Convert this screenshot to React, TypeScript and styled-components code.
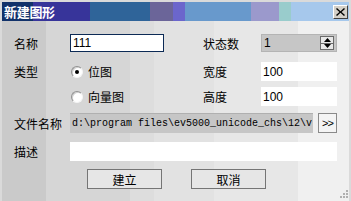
import styled, {createGlobalStyle} from "styled-components";

const GlobalStyle = createGlobalStyle`
  html, body {
    margin: 0;
    padding: 0;
    background: #ffffff;
  }
  * {
    box-sizing: border-box;
  }
`;

const cjk = `"Noto Sans CJK SC", "Noto Sans", sans-serif`;

const FILE_PATH = "d:\\program files\\ev5000_unicode_chs\\12\\v";

export default function App() {
    return (
        <>
            <GlobalStyle/>
            <Window>
                <TitleBar>
                    <Title>新建图形</Title>
                    <CloseButton>
                        <svg width="9" height="8" viewBox="0 0 9 8">
                            <path d="M1 0 L4.5 3.2 L8 0 L9 1 L5.6 4 L9 7 L8 8 L4.5 4.8 L1 8 L0 7 L3.4 4 L0 1 Z" fill="#000"/>
                        </svg>
                    </CloseButton>
                </TitleBar>
                <Body>
                    <Row $h={18} $mt={0}>
                        <Label>名称</Label>
                        <TextBox $bordered>111</TextBox>
                        <RightLabel>状态数</RightLabel>
                        <Spinner>
                            <span>1</span>
                            <SpinButtons>
                                <SpinButton>
                                    <svg width="7" height="4" viewBox="0 0 7 4"><path d="M3.5 0 L7 4 L0 4 Z" fill="#000"/></svg>
                                </SpinButton>
                                <SpinButton>
                                    <svg width="7" height="4" viewBox="0 0 7 4"><path d="M0 0 L7 0 L3.5 4 Z" fill="#000"/></svg>
                                </SpinButton>
                            </SpinButtons>
                        </Spinner>
                    </Row>
                    <Row $h={19} $mt={10}>
                        <Label>类型</Label>
                        <RadioOption>
                            <RadioDot $checked/>
                            位图
                        </RadioOption>
                        <RightLabel>宽度</RightLabel>
                        <TextBox>100</TextBox>
                    </Row>
                    <Row $h={19} $mt={6}>
                        <RadioOption>
                            <RadioDot/>
                            向量图
                        </RadioOption>
                        <RightLabel>高度</RightLabel>
                        <TextBox>100</TextBox>
                    </Row>
                    <Row $h={20} $mt={7}>
                        <Label>文件名称</Label>
                        <Wide>
                            <PathBox>{FILE_PATH}</PathBox>
                            <BrowseButton>&gt;&gt;</BrowseButton>
                        </Wide>
                    </Row>
                    <Row $h={19} $mt={9}>
                        <Label>描述</Label>
                        <Wide>
                            <TextBox/>
                        </Wide>
                    </Row>
                    <Row $h={20} $mt={8}>
                        <ButtonBar>
                            <PushButton>建立</PushButton>
                            <PushButton>取消</PushButton>
                        </ButtonBar>
                    </Row>
                    <Grip>
                        <svg width="9" height="9" viewBox="0 0 9 9">
                            <rect x="6" y="0" width="2" height="2" fill="#b0b0b0"/>
                            <rect x="3" y="3" width="2" height="2" fill="#b0b0b0"/>
                            <rect x="6" y="3" width="2" height="2" fill="#b0b0b0"/>
                            <rect x="0" y="6" width="2" height="2" fill="#b0b0b0"/>
                            <rect x="3" y="6" width="2" height="2" fill="#b0b0b0"/>
                            <rect x="6" y="6" width="2" height="2" fill="#b0b0b0"/>
                        </svg>
                    </Grip>
                </Body>
            </Window>
        </>
    );
}

const Window = styled.div`
  width: 351px;
  height: 201px;
  display: flex;
  flex-direction: column;
  border: 2px solid #dadada;
  border-bottom: none;
  font-family: ${cjk};
  font-size: 12px;
  color: #000;
`;

const TitleBar = styled.div`
  height: 19px;
  flex: 0 0 19px;
  display: flex;
  align-items: center;
  justify-content: space-between;
  padding: 0 1px 0 2px;
  background: linear-gradient(to right,
    #12326a 0, #12326a 31px,
    #37349a 31px, #37349a 88px,
    #2f6499 88px, #2f6499 148px,
    #6b6599 148px, #6b6599 171px,
    #6b66cc 171px, #6b66cc 183px,
    #6899cc 183px, #6899cc 249px,
    #9b99cc 249px, #9b99cc 277px,
    #99cccc 277px, #99cccc 289px,
    #a6c8ec 289px);
`;

const Title = styled.div`
  color: #ffffff;
  font-weight: bold;
  font-size: 13px;
  line-height: 15px;
  letter-spacing: -0.3px;
`;

const CloseButton = styled.div`
  width: 15px;
  height: 14px;
  margin-top: 1px;
  display: flex;
  align-items: center;
  justify-content: center;
  background: #d4d0c8;
  border: 1px solid;
  border-color: #ffffff #404040 #404040 #ffffff;
`;

const Body = styled.div`
  flex: 1;
  position: relative;
  padding: 13px 0 0 12px;
  background: linear-gradient(to right,
    #cacaca 0, #cacaca 44px,
    #d6d6d6 44px, #d6d6d6 128px,
    #dddddd 128px, #dddddd 152px,
    #e2e2e2 152px, #e2e2e2 212px,
    #e7e7e7 212px, #e7e7e7 296px,
    #f0f0f0 296px);
`;

const Row = styled.div<{ $h: number; $mt: number }>`
  display: grid;
  grid-template-columns: 56px 94px 39px 58px 76px;
  height: ${p => p.$h}px;
  margin-top: ${p => p.$mt}px;
  align-items: stretch;
`;

const Label = styled.div`
  grid-column: 1;
  display: flex;
  align-items: center;
  white-space: nowrap;
`;

const RightLabel = styled(Label)`
  grid-column: 4;
`;

const TextBox = styled.div<{ $bordered?: boolean }>`
  display: flex;
  align-items: center;
  padding-left: 2px;
  background: #ffffff;
  border: ${p => (p.$bordered ? "1px solid #0c2a55" : "none")};
  font-family: "Liberation Sans", Arial, sans-serif;
  font-size: 12px;
  flex: 1;
`;

const Spinner = styled.div`
  grid-column: 5;
  display: flex;
  align-items: center;
  justify-content: space-between;
  padding: 0 2px 0 2px;
  background: #c6c6c6;
  border: 1px solid #b4b4b4;
  font-family: "Liberation Sans", Arial, sans-serif;
`;

const SpinButtons = styled.div`
  display: flex;
  flex-direction: column;
  width: 14px;
  height: 14px;
`;

const SpinButton = styled.div`
  flex: 1;
  display: flex;
  align-items: center;
  justify-content: center;
  background: #e8e8e8;
  border: 1px solid #6a6a6a;
  &:first-child {
    border-bottom: none;
  }
`;

const RadioOption = styled.div`
  grid-column: 2;
  display: flex;
  align-items: center;
  gap: 5px;
  padding-left: 1px;
  white-space: nowrap;
`;

const RadioDot = styled.span<{ $checked?: boolean }>`
  width: 12px;
  height: 12px;
  border-radius: 50%;
  background: #ffffff;
  border: 1px solid;
  border-color: #909090 #f4f4f4 #f4f4f4 #909090;
  box-shadow: inset 1px 1px 0 #d0d0d0;
  position: relative;
  &::after {
    content: "";
    display: ${p => (p.$checked ? "block" : "none")};
    position: absolute;
    left: 3px;
    top: 3px;
    width: 4px;
    height: 4px;
    border-radius: 50%;
    background: #000;
  }
`;

const Wide = styled.div`
  grid-column: 2 / 6;
  display: flex;
  gap: 5px;
`;

const PathBox = styled.div`
  flex: 1;
  display: flex;
  align-items: center;
  padding-left: 2px;
  overflow: hidden;
  white-space: nowrap;
  background: #c6c6c6;
  border-top: 1px solid #b0b0b0;
  font-family: "Liberation Mono", "Courier New", monospace;
  font-size: 10px;
`;

const BrowseButton = styled.div`
  width: 19px;
  display: flex;
  align-items: center;
  justify-content: center;
  background: #f4f4f4;
  border: 1px solid #8a8a8a;
  font-family: "Liberation Sans", Arial, sans-serif;
  font-size: 11px;
  letter-spacing: -1px;
`;

const ButtonBar = styled.div`
  grid-column: 1 / 6;
  display: flex;
  gap: 29px;
  padding-left: 73px;
`;

const PushButton = styled.div`
  width: 75px;
  display: flex;
  align-items: center;
  justify-content: center;
  background: #e6e6e6;
  border: 1px solid #757575;
`;

const Grip = styled.div`
  position: absolute;
  right: 0;
  bottom: 2px;
  width: 9px;
  height: 9px;
  display: flex;
`;
